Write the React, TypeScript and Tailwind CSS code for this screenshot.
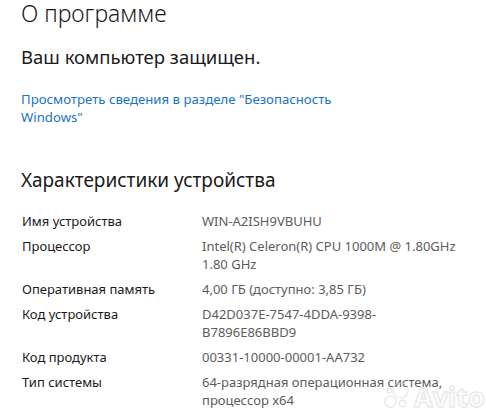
import React from "react";

const specs: { label: string; value: string[] }[] = [
  { label: "Имя устройства", value: ["WIN-A2ISH9VBUHU"] },
  { label: "Процессор", value: ["Intel(R) Celeron(R) CPU 1000M @ 1.80GHz", "1.80 GHz"] },
  { label: "Оперативная память", value: ["4,00 ГБ (доступно: 3,85 ГБ)"] },
  { label: "Код устройства", value: ["D42D037E-7547-4DDA-9398-", "B7896E86BBD9"] },
  { label: "Код продукта", value: ["00331-10000-00001-AA732"] },
  { label: "Тип системы", value: ["64-разрядная операционная система,", "процессор x64"] },
];

function Watermark() {
  return (
    <div className="pointer-events-none absolute left-[382px] top-[382px] flex items-center gap-1 opacity-50">
      <svg width="28" height="28" viewBox="0 0 30 30">
        <circle cx="20" cy="9" r="8" fill="none" stroke="#d4d4d4" strokeWidth="1.5" />
        <circle cx="9" cy="21" r="6" fill="none" stroke="#d4d4d4" strokeWidth="1.5" />
        <circle cx="22" cy="23" r="3.5" fill="none" stroke="#d4d4d4" strokeWidth="1.5" />
        <circle cx="8" cy="9" r="2.5" fill="none" stroke="#d4d4d4" strokeWidth="1.5" />
      </svg>
      <span
        className="text-[27px] font-bold leading-none text-transparent"
        style={{ WebkitTextStroke: "1.5px #d4d4d4" }}
      >
        Avito
      </span>
    </div>
  );
}

export default function App() {
  return (
    <div
      className="relative h-[418px] w-[486px] overflow-hidden bg-white pl-[21px] text-[#1a1a1a]"
      style={{ fontFamily: '"Noto Sans", "Open Sans", sans-serif' }}
    >
      <h1 className="text-[23px] font-light leading-[27px]">О программе</h1>
      <p className="mt-[18px] text-[18.5px] leading-[24px]">Ваш компьютер защищен.</p>
      <a className="mt-[21px] block w-[340px] text-[13.2px] leading-[18px] text-[#1a73c0]">
        Просмотреть сведения в разделе "Безопасность Windows"
      </a>
      <h2 className="mt-[40px] text-[19px] leading-[28px]">Характеристики устройства</h2>
      <div className="mt-[18px] flex flex-col gap-[7px] text-[13px] leading-[18px]">
        {specs.map((s) => (
          <div key={s.label} className="flex">
            <div className="w-[181px] shrink-0 pl-px">{s.label}</div>
            <div className="text-[#5c5c5c]">
              {s.value.map((v) => (
                <div key={v} className="whitespace-nowrap">
                  {v}
                </div>
              ))}
            </div>
          </div>
        ))}
      </div>
      <Watermark />
    </div>
  );
}
